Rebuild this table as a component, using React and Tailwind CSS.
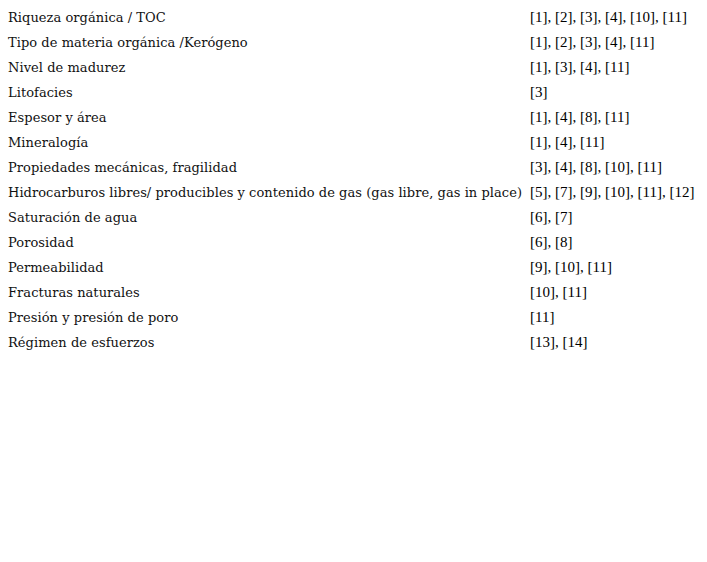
const rows = [
  ["Riqueza orgánica / TOC", "[1], [2], [3], [4], [10], [11]"],
  ["Tipo de materia orgánica /Kerógeno", "[1], [2], [3], [4], [11]"],
  ["Nivel de madurez", "[1], [3], [4], [11]"],
  ["Litofacies", "[3]"],
  ["Espesor y área", "[1], [4], [8], [11]"],
  ["Mineralogía", "[1], [4], [11]"],
  ["Propiedades mecánicas, fragilidad", "[3], [4], [8], [10], [11]"],
  ["Hidrocarburos libres/ producibles y contenido de gas (gas libre, gas in place)", "[5], [7], [9], [10], [11], [12]"],
  ["Saturación de agua", "[6], [7]"],
  ["Porosidad", "[6], [8]"],
  ["Permeabilidad", "[9], [10], [11]"],
  ["Fracturas naturales", "[10], [11]"],
  ["Presión y presión de poro", "[11]"],
  ["Régimen de esfuerzos", "[13], [14]"],
];

export default function App() {
  return (
    <div className="min-h-screen bg-white text-black">
      <div className="grid grid-cols-[530px_1fr] pt-[5px]">
        {rows.map(([name, refs]) => (
          <div key={name} className="contents">
            <div className="pl-[8px] h-[25px] pt-px flex items-center whitespace-nowrap font-['DejaVu_Serif',serif] text-[13px] tracking-[0.05px] text-[#111]">
              {name}
            </div>
            <div className="h-[25px] flex items-center whitespace-nowrap font-['Liberation_Serif',serif] text-[15px]">
              {refs}
            </div>
          </div>
        ))}
      </div>
    </div>
  );
}
